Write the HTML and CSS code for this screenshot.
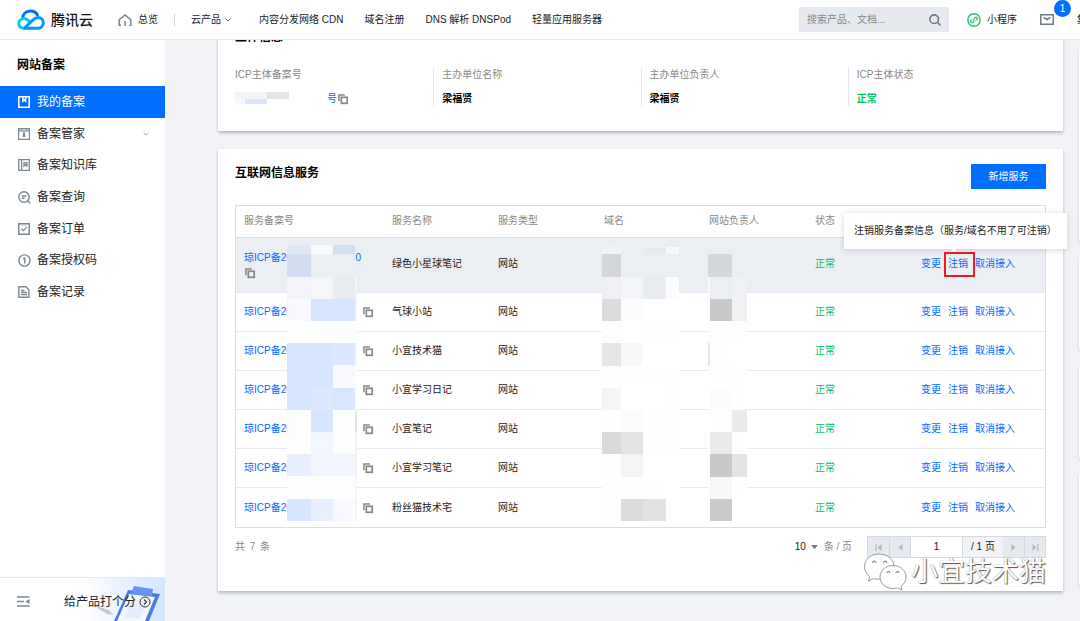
FILE: index.html
```html
<!DOCTYPE html>
<html lang="zh-CN">
<head>
<meta charset="utf-8">
<meta name="viewport" content="width=device-width, initial-scale=1">
<title>我的备案 - 腾讯云</title>
<link rel="stylesheet" href="styles.css">
</head>
<body>
<svg class="sprite" width="0" height="0" aria-hidden="true">
  <symbol id="copy" viewBox="0 0 12 12"><path d="M1.900 8.200V1.900h6" fill="none" stroke="currentColor" stroke-width="1.500"/><rect x="4.300" y="4.300" width="5.900" height="6" fill="none" stroke="currentColor" stroke-width="1.700"/></symbol>
</svg>

<header class="topbar">
  <a class="logo" href="#">
    <svg width="28" height="22" viewBox="0 0 28 22" fill="none" stroke-width="3">
      <path d="M5.600 9.600C5.800 4.900 9.200 1.900 13.400 1.900c3.700 0 6.400 2 7.500 5" stroke="#006eff"/>
      <path d="M13.200 13.400C11.200 11.200 9.400 9.600 6.900 9.600 3.900 9.600 1.700 11.800 1.700 14.600c0 2.900 2.200 4.600 5 4.600" stroke="#00d0e4"/>
      <path d="M6.300 19.200H21c3 0 5.300-2.200 5.300-5.400 0-3-2.300-5.200-5.200-5.200-2.300 0-3.800 1.100-5.300 2.500L7.600 19" stroke="#0099ff"/>
    </svg>
    <span>腾讯云</span>
  </a>
  <nav class="nav">
    <a class="nav-home" href="#">
      <svg width="14" height="12" viewBox="0 0 14 12" fill="none" stroke="#7d8890" stroke-width="1.500"><path d="M1.200 12V5.600L7 1l5.800 4.600V12H11M1.200 11.300H3M7 7v5"/></svg>
      总览
    </a>
    <span class="nav-line"></span>
    <a class="nav-products" href="#">云产品
      <svg width="6" height="4" viewBox="0 0 6 4" fill="none" stroke="#666"><path d="m.5.5 2.500 2.500L5.500.5"/></svg>
    </a>
    <a href="#">内容分发网络 CDN</a>
    <a href="#">域名注册</a>
    <a href="#">DNS 解析 DNSPod</a>
    <a href="#">轻量应用服务器</a>
  </nav>
  <div class="tools">
    <form class="search">
      <input type="text" placeholder="搜索产品、文档..." aria-label="搜索产品、文档">
      <button type="button" aria-label="搜索">
        <svg width="12" height="12" viewBox="0 0 12 12" fill="none" stroke="#6e7a82" stroke-width="1.600"><circle cx="5.200" cy="5.200" r="4.300"/><path d="m8.300 8.300 3.200 3.200"/></svg>
      </button>
    </form>
    <a class="mini" href="#">
      <svg width="14" height="14" viewBox="0 0 14 14" fill="none" stroke="#2bc06a" stroke-width="1.400"><circle cx="7" cy="7" r="6.200"/><path d="M5.200 7.100C3.900 7 3.400 8 3.800 8.900c.7 1.500 3.200 1 3.200-.9V6c0-1.900 2.500-2.400 3.200-.9.4.9-.1 1.900-1.400 1.800" stroke-width="1.200"/></svg>
      小程序
    </a>
    <a class="mail" href="#" aria-label="消息">
      <svg width="14" height="11" viewBox="0 0 14 11" fill="none" stroke="#6e7a82" stroke-width="1.500"><path d="M.8.8h12.400v9.400H.8zM3.500 3.300 7 5.500l3.500-2.200"/></svg>
      <span class="badge">1</span>
    </a>
    <a class="account" href="#">集团账号</a>
  </div>
</header>

<div class="layout">
  <aside class="sidebar">
    <h1 class="side-title">网站备案</h1>
    <ul class="menu">
      <li class="active"><a href="#"><svg width="12" height="12" viewBox="0 0 12 12" fill="none" stroke="currentColor" stroke-width="1.500"><path d="M.8.8h10.400v10.400H.8zM4.800 1v4.200L6.200 4l1.400 1.200V1"/></svg>我的备案</a></li>
      <li><a href="#"><svg width="12" height="12" viewBox="0 0 12 12" fill="none" stroke="currentColor" stroke-width="1.200"><path d="M.6.7h10.800v10.600H.6zM.6 2.900h3.800M7.600 2.900h3.800M4 1v2M8 1v2"/><path d="M6 2.500v6" stroke-width="1.600"/><path d="M6 6v3" stroke-width="2.400"/></svg>备案管家<svg class="chev" width="6" height="4" viewBox="0 0 6 4" fill="none" stroke="#aeb4b8"><path d="m.5.5 2.500 2.500L5.500.5"/></svg></a></li>
      <li><a href="#"><svg width="12" height="12" viewBox="0 0 12 12" fill="none" stroke="currentColor" stroke-width="1.300"><path d="M.7.7h10.600v10.600H.7zM3.600 1v10M6 7V3.600h3V7L7.500 5.700z"/></svg>备案知识库</a></li>
      <li><a href="#"><svg width="13" height="13" viewBox="0 0 13 13" fill="none" stroke="currentColor" stroke-width="1.400"><circle cx="6" cy="6" r="5.200"/><path d="m9.800 9.800 2.600 2.600M3.700 5h4.800M3.700 7.200h3"/></svg>备案查询</a></li>
      <li><a href="#"><svg width="12" height="12" viewBox="0 0 12 12" fill="none" stroke="currentColor" stroke-width="1.500"><path d="M.8.8h10.400v10.400H.8z"/><path d="m3.300 5.700 2 2 3.500-3.500M4 2.500h1M7 2.500h1" stroke-width="1.200"/></svg>备案订单</a></li>
      <li><a href="#"><svg width="13" height="13" viewBox="0 0 13 13" fill="none" stroke="currentColor" stroke-width="1.400"><circle cx="6.500" cy="6.500" r="5.600"/><path d="m5 5 1.700-1v5.500"/></svg>备案授权码</a></li>
      <li><a href="#"><svg width="12" height="12" viewBox="0 0 12 12" fill="none" stroke="currentColor" stroke-width="1.400"><path d="M.9.8h7l3 3v7.400h-10zM3 4.500h3.500M3 6.500h6M3 8.600h6"/></svg>备案记录</a></li>
    </ul>
    <div class="side-foot">
      <svg class="art" width="78" height="43" viewBox="0 0 78 43" aria-hidden="true">
        <path d="m6 27 16 5 4 5-6-1z" fill="#c3c9d3"/>
        <path d="m41 12 32 4-11 27H27z" fill="#4a7de0"/>
        <path d="m42 16 26 3-10 24H30z" fill="#f3f7fe"/>
        <path d="m44 22 16 2-7 16H38z" fill="#e6eefa"/>
        <path d="m47 8 19 3-1 7-21-2z" fill="#6594f2"/>
      </svg>
      <button class="fold" type="button" aria-label="收起菜单">
        <svg width="13" height="11" viewBox="0 0 13 11" fill="none" stroke="#7d8890" stroke-width="1.600"><path d="M0 1h12.500M0 5.500h7M0 10h12.500"/><path d="m12.500 3-4 2.500 4 2.500z" fill="#7d8890" stroke="none"/></svg>
      </button>
      <a class="rate" href="#">给产品打个分
        <svg width="12" height="12" viewBox="0 0 12 12" fill="none" stroke="#333"><circle cx="6" cy="6" r="5"/><path d="m5 3.500 2.500 2.500L5 8.500" stroke-width="1.200"/></svg>
      </a>
    </div>
  </aside>

  <main class="content">
    <section class="card subject">
      <h2>主体信息</h2>
      <dl class="facts">
        <div><dt>ICP主体备案号</dt><dd class="licence">
          <svg width="54" height="13" viewBox="0 0 54 13" aria-hidden="true"><path fill="#f3f4f5" d="M0 0h32v7H0z"/><path fill="#e5e5e5" d="M32 0h22v7H32z"/><path fill="#f5f8fe" d="M0 7h10v6H0z"/><path fill="#d8e5ff" d="M10 7h22v5H10z"/></svg>
          <span class="licence-end">号<button class="copy" type="button" aria-label="复制"><svg width="12" height="12"><use href="#copy"/></svg></button></span></dd></div>
        <div><dt>主办单位名称</dt><dd>梁福贤</dd></div>
        <div><dt>主办单位负责人</dt><dd>梁福贤</dd></div>
        <div><dt>ICP主体状态</dt><dd class="ok">正常</dd></div>
      </dl>
    </section>

    <section class="card services">
      <div class="card-head">
        <h2>互联网信息服务</h2>
        <button class="primary" type="button">新增服务</button>
      </div>
      <div class="table-wrap">
        <table>
          <colgroup><col class="c-no"><col class="c"><col class="c"><col class="c-domain"><col class="c"><col class="c"><col></colgroup>
          <thead>
            <tr><th>服务备案号</th><th>服务名称</th><th>服务类型</th><th>域名</th><th>网站负责人</th><th>状态</th><th></th></tr>
          </thead>
          <tbody>
            <tr class="hover">
              <td><a class="no" href="#"><span>琼ICP备20</span><span>0</span></a><button class="copy below" type="button" aria-label="复制"><svg width="12" height="12"><use href="#copy"/></svg></button></td>
              <td>绿色小星球笔记</td><td>网站</td><td></td><td></td><td class="ok">正常</td>
              <td><div class="acts"><a href="#">变更</a><span class="target"><a href="#">注销</a><span class="mark"></span><span class="tip" role="tooltip">注销服务备案信息（服务/域名不用了可注销）</span></span><a href="#">取消接入</a></div></td>
            </tr>
            <tr><td><div class="line"><a class="no" href="#">琼ICP备20</a><button class="copy" type="button" aria-label="复制"><svg width="12" height="12"><use href="#copy"/></svg></button></div></td><td>气球小站</td><td>网站</td><td></td><td></td><td class="ok">正常</td><td><div class="acts"><a href="#">变更</a><a href="#">注销</a><a href="#">取消接入</a></div></td></tr>
            <tr><td><div class="line"><a class="no" href="#">琼ICP备20</a><button class="copy" type="button" aria-label="复制"><svg width="12" height="12"><use href="#copy"/></svg></button></div></td><td>小宜技术猫</td><td>网站</td><td></td><td></td><td class="ok">正常</td><td><div class="acts"><a href="#">变更</a><a href="#">注销</a><a href="#">取消接入</a></div></td></tr>
            <tr><td><div class="line"><a class="no" href="#">琼ICP备20</a><button class="copy" type="button" aria-label="复制"><svg width="12" height="12"><use href="#copy"/></svg></button></div></td><td>小宜学习日记</td><td>网站</td><td></td><td></td><td class="ok">正常</td><td><div class="acts"><a href="#">变更</a><a href="#">注销</a><a href="#">取消接入</a></div></td></tr>
            <tr><td><div class="line"><a class="no" href="#">琼ICP备20</a><button class="copy" type="button" aria-label="复制"><svg width="12" height="12"><use href="#copy"/></svg></button></div></td><td>小宜笔记</td><td>网站</td><td></td><td></td><td class="ok">正常</td><td><div class="acts"><a href="#">变更</a><a href="#">注销</a><a href="#">取消接入</a></div></td></tr>
            <tr><td><div class="line"><a class="no" href="#">琼ICP备20</a><button class="copy" type="button" aria-label="复制"><svg width="12" height="12"><use href="#copy"/></svg></button></div></td><td>小宜学习笔记</td><td>网站</td><td></td><td></td><td class="ok">正常</td><td><div class="acts"><a href="#">变更</a><a href="#">注销</a><a href="#">取消接入</a></div></td></tr>
            <tr><td><div class="line"><a class="no" href="#">琼ICP备20</a><button class="copy" type="button" aria-label="复制"><svg width="12" height="12"><use href="#copy"/></svg></button></div></td><td>粉丝猫技术宅</td><td>网站</td><td></td><td></td><td class="ok">正常</td><td><div class="acts"><a href="#">变更</a><a href="#">注销</a><a href="#">取消接入</a></div></td></tr>
          </tbody>
        </table>
        <svg class="mosaic mosaic-no" width="70" height="276" aria-hidden="true"></svg>
        <svg class="mosaic mosaic-domain" width="77" height="274" aria-hidden="true"></svg>
        <svg class="mosaic mosaic-owner" width="39" height="267" aria-hidden="true"></svg>
      </div>
      <div class="pager">
        <span class="total">共 7 条</span>
        <label class="size"><select aria-label="每页条数"><option>10</option></select>
          <svg width="7" height="4" viewBox="0 0 7 4" fill="#777"><path d="M0 0h7L3.500 4z"/></svg><span>条 / 页</span></label>
        <div class="pages">
          <button type="button" disabled aria-label="首页"><svg width="7" height="7" viewBox="0 0 7 7" fill="#b3b8bf"><path d="M.5 0h1.200v7H.5zM6.500 0v7l-4-3.500z"/></svg></button>
          <button type="button" disabled aria-label="上一页"><svg width="7" height="7" viewBox="0 0 7 7" fill="#b3b8bf"><path d="M5.500 0v7l-4-3.500z"/></svg></button>
          <input type="text" value="1" aria-label="页码">
          <span class="count">/ 1 页</span>
          <button type="button" disabled aria-label="下一页"><svg width="7" height="7" viewBox="0 0 7 7" fill="#b3b8bf"><path d="M1.500 0v7l4-3.500z"/></svg></button>
          <button type="button" disabled aria-label="末页"><svg width="7" height="7" viewBox="0 0 7 7" fill="#b3b8bf"><path d="M5.300 0h1.200v7H5.300zM.5 0v7l4-3.500z"/></svg></button>
        </div>
      </div>
      <div class="watermark">
        <svg width="44" height="38" viewBox="0 0 44 38" fill="#fff" stroke="#999" stroke-width="1">
          <path d="M16 1C7.500 1 1.500 6.500 1.500 13.500c0 4.500 2 7.800 5 10L5.500 28l5-2.500c2 .6 4 .8 6 .7C23 26 31 21 31 13.500 31 6.500 24.500 1 16 1z"/>
          <path d="M30 12.500c-7.500 0-13 5-13 11.500s5.500 11.500 13 11.500c1.700 0 3.300-.2 4.700-.6l4.300 2.100-1-3.700c3-2.200 5-5.400 5-9.300 0-6.500-5.500-11.500-13-11.500z"/>
          <path d="M9.500 9.800a1.700 1.700 0 0 1 3.400 0M20.500 9.800a1.700 1.700 0 0 1 3.400 0M24 20a1.500 1.500 0 0 1 3 0M33 20a1.500 1.500 0 0 1 3 0" fill="none" stroke="#666"/>
        </svg>
        <span>小宜技术猫</span>
      </div>
    </section>
  </main>

  <aside class="rail" aria-hidden="true">
    <div class="panel panel-l"></div>
    <div class="panel"></div>
    <div class="panel"></div>
    <div class="panel panel-m"></div>
  </aside>
</div>
<script src="mosaic.js"></script>
</body>
</html>
```
FILE: styles.css
```css
* { box-sizing: border-box; }
body {
  margin: 0;
  height: 100vh;
  display: flex;
  flex-direction: column;
  overflow: hidden;
  background: #f2f3f7;
  color: #222;
  font: 10px/20px "Liberation Sans", "Noto Sans CJK SC", sans-serif;
}
a { color: inherit; text-decoration: none; }
button, input, select { font: inherit; color: inherit; margin: 0; padding: 0; border: 0; border-radius: 0; }
button { cursor: pointer; background: none; }
h1, h2, ul, dl, dd { margin: 0; padding: 0; }
svg { display: block; flex: none; }
.sprite { position: absolute; }

.topbar {
  position: relative;
  z-index: 2;
  display: flex;
  align-items: center;
  flex: none;
  height: 40px;
  padding-left: 17px;
  background: #fff;
  border-bottom: 1px solid #e6e8ec;
  white-space: nowrap;
  overflow: hidden;
}
.logo { display: flex; align-items: center; gap: 6px; width: 101px; font-size: 14px; font-weight: 500; color: #111; }
.nav { display: flex; align-items: center; gap: 21px; flex: 1; }
.nav-home { display: flex; align-items: center; gap: 6px; }
.nav-line { width: 1px; height: 12px; margin: 0 -5px; background: #cfd3d8; }
.nav-products { display: flex; align-items: center; gap: 4px; margin-right: 7px; }
.tools { display: flex; align-items: center; width: 281px; flex: none; }
.search { display: flex; align-items: center; width: 150px; height: 25px; padding: 0 8px; background: #e6e9ed; }
.search input { flex: 1; min-width: 0; background: none; outline: 0; }
.search input::placeholder { color: #888; opacity: 1; }
.mini { display: flex; align-items: center; gap: 6px; margin-left: 18px; }
.mail { position: relative; margin-left: 23px; }
.badge {
  position: absolute;
  left: 14px;
  top: -14px;
  width: 17px;
  height: 17px;
  border-radius: 50%;
  background: #006eff;
  color: #fff;
  line-height: 17px;
  text-align: center;
}
.account { margin-left: 23px; }

.layout { display: flex; flex: 1; min-height: 0; }
.sidebar { display: flex; flex-direction: column; flex: none; width: 165px; background: #fff; }
.side-title { padding: 15px 17px 11px; font-size: 12px; line-height: 20px; font-weight: 700; color: #000; }
.menu { display: flex; flex-direction: column; height: 222px; list-style: none; font-size: 12px; }
.menu li { flex: 1; display: flex; }
.menu a { display: flex; align-items: center; gap: 7px; flex: 1; padding: 0 16px 0 18px; }
.menu svg { color: #7d8890; margin-right: -1px; }
.menu svg[width="12"] { margin-right: 0; }
.menu .chev { margin-left: auto; margin-right: 0; }
.menu .active { background: #006eff; color: #fff; }
.menu .active svg { color: #fff; }
.side-foot {
  position: relative;
  display: flex;
  align-items: center;
  height: 44px;
  margin-top: auto;
  padding: 4px 14px 0 17px;
  border-top: 1px solid #e6e8ec;
  background: linear-gradient(90deg, #fff 50%, #d3e5ff);
  font-size: 12px;
}
.art { position: absolute; right: 0; bottom: 0; }
.fold { margin-right: auto; }
.rate { position: relative; display: flex; align-items: center; gap: 3px; }

.content { flex: 1; min-width: 0; padding: 0 16px 0 53px; }
.card { position: relative; background: #fff; box-shadow: 0 2px 3px rgba(54, 58, 80, .32); }
.card h2 { font-size: 12px; line-height: 16px; font-weight: 700; color: #000; }
.subject { margin-top: -30px; padding: 19px 8px 25px; }
.subject h2 { margin: 0 9px 22px; }
.facts { display: grid; grid-template-columns: repeat(4, 1fr); line-height: 14px; }
.facts > div { height: 39px; padding: 1px 0 0 8px; border-left: 1px solid #e7e9ee; }
.facts > div:first-child { border-color: transparent; }
.facts dt { margin-bottom: 10px; color: #888; }
.facts dd { font-weight: 700; color: #000; }
.facts .licence { display: flex; width: 114px; justify-content: space-between; font-weight: 400; color: #006eff; }
.licence-end { display: flex; align-items: center; }
.facts .ok { color: #0abf5b; }

.services { margin-top: 18px; padding: 15px 17px 33px; }
.card-head { display: flex; justify-content: space-between; margin-bottom: 16px; }
.card-head h2 { padding-top: 1px; }
.primary { width: 75px; height: 25px; background: #006eff; color: #fff; }
.table-wrap { position: relative; }
table { width: 100%; table-layout: fixed; border-collapse: separate; border-spacing: 0; border: 1px solid #d9dde5; }
.c-no { width: 148px; }
.c { width: 106px; }
.c-domain { width: 105px; }
th, td { padding: 0 0 0 8px; text-align: left; font-weight: 400; white-space: nowrap; }
th { height: 32px; padding-bottom: 1px; color: #888; border-bottom: 1px solid #d9dde5; }
td { height: 39px; border-bottom: 1px solid #e9ebf1; }
tbody tr:last-child td { border-bottom: 0; }
.hover td { height: 55px; padding-bottom: 2px; background: #ebeef3; }
td.ok { color: #0abf5b; }
.line { display: flex; align-items: center; justify-content: space-between; width: 130px; }
.no { display: flex; justify-content: space-between; color: #006eff; line-height: 16px; }
.hover .no { width: 117px; }
.copy { display: block; color: #888; }
.below { margin: 1px 0 0; }
.acts { display: flex; gap: 7px; color: #006eff; }
.target { position: relative; }
.mark { position: absolute; inset: -2px -7px -3px -4px; border: 2px solid #ed1c24; pointer-events: none; }
.tip {
  position: absolute;
  z-index: 3;
  left: -104px;
  bottom: 25px;
  width: 223px;
  padding: 8px 10px;
  background: #fff;
  color: #222;
  box-shadow: 0 1px 6px rgba(54, 58, 80, .2);
}
.tip::after {
  content: "";
  position: absolute;
  left: 107px;
  top: 100%;
  border: 3px solid transparent;
  border-top-color: #fff;
}
.mosaic { position: absolute; }
.mosaic-no { left: 52px; top: 40px; }
.mosaic-domain { left: 367px; top: 42px; }
.mosaic-owner { left: 473px; top: 49px; }

.pager { display: flex; align-items: center; margin-top: 8px; color: #888; }
.total { word-spacing: 2px; }
.size { display: flex; align-items: center; margin: 0 15px 0 auto; }
.size select { appearance: none; width: 16px; background: none; color: #222; }
.size span { margin-left: 6px; }
.pages { display: flex; height: 22px; border: 1px solid #d5d9e0; background: #e6e9ef; }
.pages button { display: grid; place-items: center; width: 21px; }
.pages button + button { border-left: 1px solid #d5d9e0; }
.pages input { width: 53px; text-align: center; background: #fff; color: #222; border: solid #d5d9e0; border-width: 0 1px; outline: 0; }
.count { width: 40px; line-height: 20px; text-align: center; background: #f2f3f7; color: #222; }
.watermark {
  position: absolute;
  right: 17px;
  bottom: 0;
  display: flex;
  align-items: center;
  gap: 4px;
  color: #fff;
  font-size: 27px;
  line-height: 36px;
  text-shadow: 1px 1px 1px #555, 0 0 1px #777;
}

.rail { width: 1px; flex: none; display: flex; flex-direction: column; gap: 17px; padding-top: 8px; }
.panel { width: 100%; height: 92px; background: #fff; box-shadow: 0 2px 3px rgba(54, 58, 80, .32); }
.panel-l { height: 192px; }
.panel-m { height: 109px; }
```
FILE: mosaic.js
```js
// Privacy mosaics over the licence, domain and owner columns.
// xs / ys are cell edges; "-" leaves a cell clear.
function mosaic(selector, xs, ys, rows) {
  const svg = document.querySelector(selector);
  rows.forEach((row, r) => {
    row.split(" ").forEach((fill, c) => {
      if (fill === "-") return;
      const rect = document.createElementNS("http://www.w3.org/2000/svg", "rect");
      rect.setAttribute("x", xs[c]);
      rect.setAttribute("y", ys[r]);
      rect.setAttribute("width", xs[c + 1] - xs[c]);
      rect.setAttribute("height", ys[r + 1] - ys[r]);
      rect.setAttribute("fill", "#" + fill);
      svg.appendChild(rect);
    });
  });
}

mosaic(".mosaic-no", [0, 24, 46, 68, 70], [0, 9, 32, 54, 76, 98, 120, 143, 165, 187, 209, 231, 254, 276], [
  "e0e7f1 f7f9fb d3dff2 -",
  "d2ddf2 ebeef3 ebeef3 -",
  "f3f4f7 f5f6f8 e9ecf0 f3f4f7",
  "f8faff d8e5ff d8e5ff f3f5fa",
  "fdfffe fdfffe fdfffe fdfffe",
  "d8e5ff d8e5ff dce8ff f5f8ff",
  "d8e5ff d8e5ff f8faff fefefe",
  "d8e5ff dce8ff d8e6ff f8faff",
  "fdfffe d8e5ff fdfffe e4e4e4",
  "fefefe f1f6ff fdfffe f2f2f2",
  "e8efff f1f6ff f1f6ff f2f2f2",
  "fdfffe fdfffe fdfffe f8f8f8",
  "d8e5ff e8f0ff f8faff f2f4f8"
]);

mosaic(".mosaic-domain", [0, 19, 41, 64, 77], [0, 7, 30, 52, 74, 96, 119, 141, 163, 185, 207, 230, 252, 274], [
  "f1f3f7 - e8ebee f8f9fb",
  "d3d5d9 - - -",
  "eef0f4 f4f5f8 e9edf2 fcfcfc",
  "dcdcdc fcfcfc ffffff ffffff",
  "fdfffe ffffff fdfffe fdfffe",
  "e6e8e7 f8f8f8 ffffff ffffff",
  "fdfffe fdfffe fdfffe fdfffe",
  "f5f5f5 ffffff ffffff fdfffe",
  "fdfffe fbfbfb fdfffe fdfffe",
  "d9d9d9 e3e3e3 fdfffe fdfffe",
  "fdfffe f4f4f4 ffffff ffffff",
  "fdfffe fdfffe fdfffe ffffff",
  "fdfffe dcdcdc e2e2e2 ffffff"
]);

mosaic(".mosaic-owner", [0, 2, 24, 39], [0, 23, 45, 67, 89, 112, 134, 156, 178, 200, 223, 245, 267], [
  "d4d6da d4d6da -",
  "fafafa ebeef3 f0f1f4",
  "ffffff c9c9c9 f0f0f0",
  "fdfffe fdfffe fdfffe",
  "e6e6e6 fdfffe ffffff",
  "fdfffe fdfffe fdfffe",
  "ffffff fcfcfc fdfffe",
  "ffffff fdfffe ebebeb",
  "ffffff eaeaea fdfffe",
  "ffffff c9c9c9 e4e4e4",
  "ffffff f7f7f7 fdfffe",
  "ffffff cacaca ffffff"
]);
```
